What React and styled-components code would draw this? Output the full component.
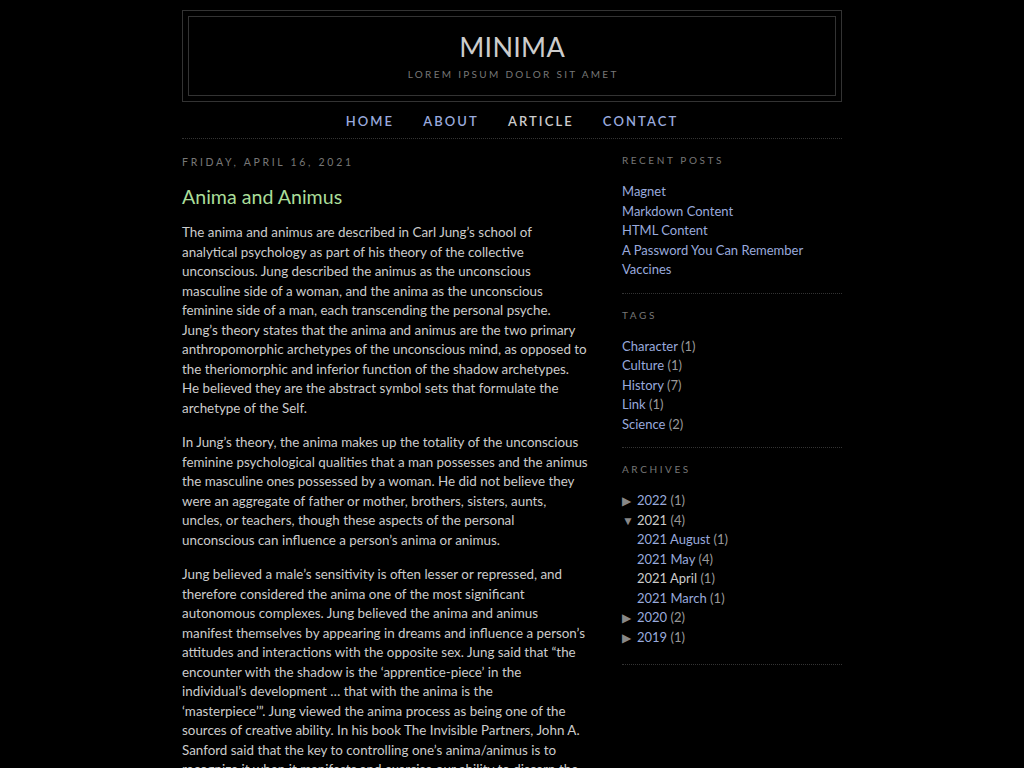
import React from "react"
import styled, { createGlobalStyle } from "styled-components"

const GlobalStyle = createGlobalStyle`
  body {
    margin: 0;
    background: #000;
    color: #ccc;
    font-family: "Trebuchet MS", Lato, "Liberation Sans", sans-serif;
    font-size: 13px;
  }
  a { text-decoration: none; }
`;

const recent = ["Magnet", "Markdown Content", "HTML Content", "A Password You Can Remember", "Vaccines"]

const tags = [
  ["Character", 1],
  ["Culture", 1],
  ["History", 7],
  ["Link", 1],
  ["Science", 2],
]

const months = [
  ["2021 August", 1, false],
  ["2021 May", 4, false],
  ["2021 April", 1, true],
  ["2021 March", 1, false],
]

// post body, broken where the original page breaks its lines
const paragraphs = [
  [
    "The anima and animus are described in Carl Jung’s school of",
    "analytical psychology as part of his theory of the collective",
    "unconscious. Jung described the animus as the unconscious",
    "masculine side of a woman, and the anima as the unconscious",
    "feminine side of a man, each transcending the personal psyche.",
    "Jung’s theory states that the anima and animus are the two primary",
    "anthropomorphic archetypes of the unconscious mind, as opposed to",
    "the theriomorphic and inferior function of the shadow archetypes.",
    "He believed they are the abstract symbol sets that formulate the",
    "archetype of the Self.",
  ],
  [
    "In Jung’s theory, the anima makes up the totality of the unconscious",
    "feminine psychological qualities that a man possesses and the animus",
    "the masculine ones possessed by a woman. He did not believe they",
    "were an aggregate of father or mother, brothers, sisters, aunts,",
    "uncles, or teachers, though these aspects of the personal",
    "unconscious can influence a person’s anima or animus.",
  ],
  [
    "Jung believed a male’s sensitivity is often lesser or repressed, and",
    "therefore considered the anima one of the most significant",
    "autonomous complexes. Jung believed the anima and animus",
    "manifest themselves by appearing in dreams and influence a person’s",
    "attitudes and interactions with the opposite sex. Jung said that “the",
    "encounter with the shadow is the ‘apprentice-piece’ in the",
    "individual’s development … that with the anima is the",
    "‘masterpiece’”. Jung viewed the anima process as being one of the",
    "sources of creative ability. In his book The Invisible Partners, John A.",
    "Sanford said that the key to controlling one’s anima/animus is to",
    "recognize it when it manifests and exercise our ability to discern the",
    "anima/animus from reality.",
  ],
]

function App() {
  return (
    <>
      <GlobalStyle />
      <Outer>
        <Header>
          <HeaderInner>
            <Title>Minima</Title>
            <Description>Lorem ipsum dolor sit amet</Description>
          </HeaderInner>
        </Header>
        <Nav>
          <NavLink href="#">Home</NavLink>
          <NavLink href="#">About</NavLink>
          <NavLink href="#" $current>Article</NavLink>
          <NavLink href="#">Contact</NavLink>
        </Nav>
        <Content>
          <Main>
            <DateHeader>Friday, April 16, 2021</DateHeader>
            <PostTitle>Anima and Animus</PostTitle>
            {paragraphs.map((lines, i) => (
              <Para key={i}>
                {lines.map((l, j) => <Line key={j}>{l}</Line>)}
              </Para>
            ))}
          </Main>
          <Sidebar>
            <Widget>
              <WidgetTitle>Recent Posts</WidgetTitle>
              <List>
                {recent.map(r => (
                  <li key={r}><SideLink href="#">{r}</SideLink></li>
                ))}
              </List>
            </Widget>
            <Widget>
              <WidgetTitle>Tags</WidgetTitle>
              <List>
                {tags.map(([name, n]) => (
                  <li key={name}>
                    <SideLink href="#">{name}</SideLink> <Count>({n})</Count>
                  </li>
                ))}
              </List>
            </Widget>
            <Widget $pad={17}>
              <WidgetTitle>Archives</WidgetTitle>
              <List>
                <li><Toggle>▶</Toggle><SideLink href="#">2022</SideLink> <Count>(1)</Count></li>
                <li>
                  <Toggle>▼</Toggle><SideLink href="#" $current>2021</SideLink> <Count>(4)</Count>
                  <SubList>
                    {months.map(([m, n, cur]) => (
                      <li key={m}>
                        <SideLink href="#" $current={cur}>{m}</SideLink> <Count>({n})</Count>
                      </li>
                    ))}
                  </SubList>
                </li>
                <li><Toggle>▶</Toggle><SideLink href="#">2020</SideLink> <Count>(2)</Count></li>
                <li><Toggle>▶</Toggle><SideLink href="#">2019</SideLink> <Count>(1)</Count></li>
              </List>
            </Widget>
          </Sidebar>
        </Content>
      </Outer>
    </>
  )
}

export default App

const Outer = styled.div`
  width: 660px;
  margin: 0 auto;
  padding: 10px 0;
`;

const Header = styled.div`
  border: 1px solid #333;
`;

const HeaderInner = styled.div`
  margin: 5px;
  border: 1px solid #333;
  height: 78px;
  display: flex;
  flex-direction: column;
  align-items: center;
`;

const Title = styled.h1`
  margin: 14px 0 0;
  font-size: 27px;
  font-weight: normal;
  line-height: 32px;
  letter-spacing: 0.01em;
  text-transform: uppercase;
  color: #ccc;
  padding-left: 0.01em;
`;

const Description = styled.p`
  margin: 4px 0 0;
  font-size: 10px;
  line-height: 14px;
  letter-spacing: 2.3px;
  text-transform: uppercase;
  color: #777;
  padding-left: 2.3px;
`;

const Nav = styled.nav`
  display: flex;
  justify-content: center;
  gap: 29px;
  padding: 11px 0 9px;
  border-bottom: 1px dotted #333;
`;

const NavLink = styled.a`
  font-size: 13px;
  font-weight: 600;
  line-height: 16px;
  letter-spacing: 2.1px;
  text-transform: uppercase;
  color: ${p => (p.$current ? "#ccc" : "#99aadd")};
`;

const Content = styled.div`
  display: flex;
  justify-content: space-between;
  align-items: flex-start;
`;

const Main = styled.div`
  width: 410px;
  padding-top: 16px;
`;

const DateHeader = styled.h2`
  margin: 0;
  font-size: 10.5px;
  font-weight: normal;
  line-height: 14px;
  letter-spacing: 2.7px;
  text-transform: uppercase;
  color: #777;
`;

const PostTitle = styled.h3`
  margin: 15px 0 13px;
  font-size: 19.6px;
  font-weight: normal;
  line-height: 26px;
  color: #aadd99;
`;

const Para = styled.p`
  margin: 0 0 15px;
  font-size: 13.4px;
  line-height: 19.5px;
  white-space: nowrap;
`;

const Line = styled.span`
  display: block;
`;

const Sidebar = styled.div`
  width: 220px;
  padding-top: 14px;
`;

const Widget = styled.div`
  border-bottom: 1px dotted #333;
  padding-bottom: ${p => p.$pad || 13}px;
  margin-bottom: 14px;
`;

const WidgetTitle = styled.h2`
  margin: 0 0 15px;
  font-size: 10px;
  font-weight: normal;
  line-height: 14px;
  letter-spacing: 2.6px;
  text-transform: uppercase;
  color: #777;
`;

const List = styled.ul`
  list-style: none;
  margin: 0;
  padding: 0;
  line-height: 19.5px;
`;

const SubList = styled.ul`
  list-style: none;
  margin: 0;
  padding: 0 0 0 15px;
`;

const SideLink = styled.a`
  color: ${p => (p.$current ? "#ccc" : "#99aadd")};
`;

const Count = styled.span`
  color: #999;
`;

const Toggle = styled.span`
  display: inline-block;
  width: 15px;
  font-size: 12px;
  line-height: 10px;
  color: #888;
`;
